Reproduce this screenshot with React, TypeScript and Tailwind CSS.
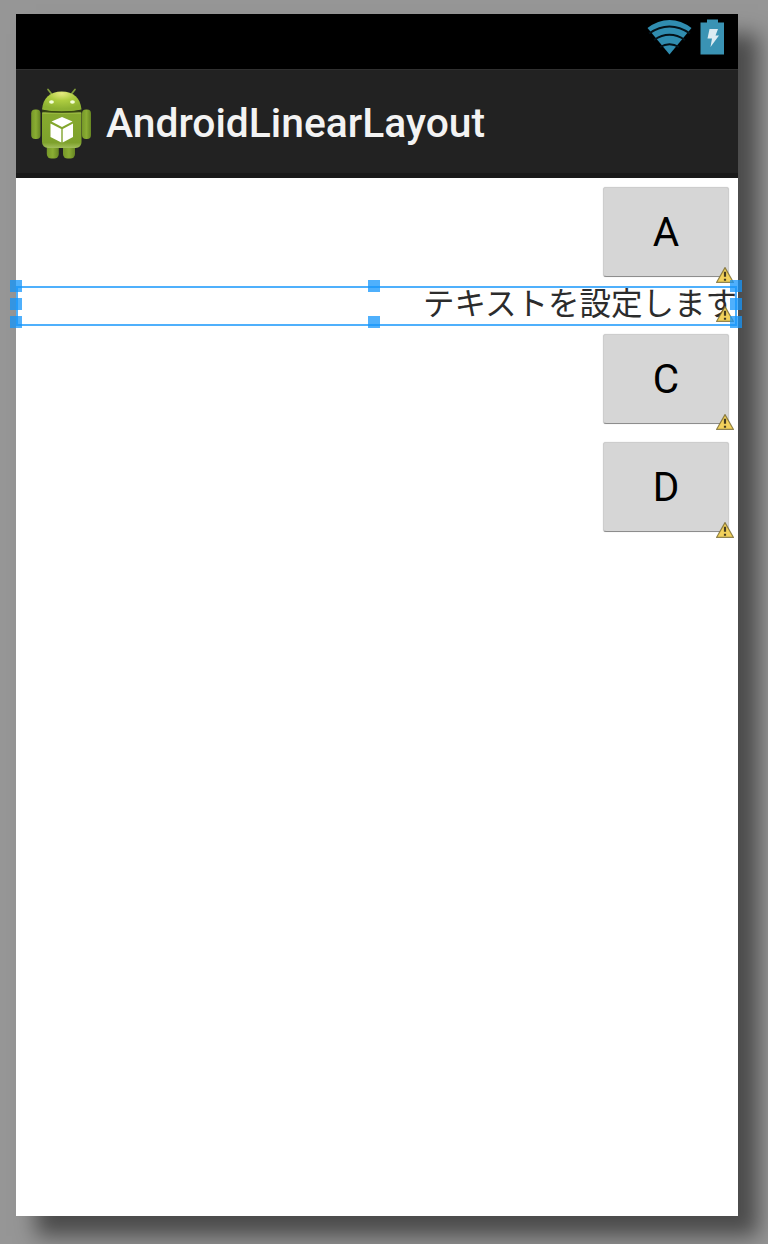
function Robot() {
  return (
    <svg className="ml-[15px] mt-[3px] h-[74px] w-[60px] shrink-0" viewBox="31 86 60 74">
      <defs>
        <linearGradient id="body" x1="0" y1="0" x2="0" y2="1">
          <stop offset="0" stopColor="#86a82f" />
          <stop offset="0.2" stopColor="#84a82e" />
          <stop offset="0.85" stopColor="#7ea12c" />
          <stop offset="1" stopColor="#a3bf5c" />
        </linearGradient>
        <radialGradient id="head" cx="0.5" cy="0.1" r="0.75">
          <stop offset="0" stopColor="#e6ea80" />
          <stop offset="0.45" stopColor="#aecd40" />
          <stop offset="1" stopColor="#8db132" />
        </radialGradient>
        <linearGradient id="limb" x1="0" y1="0" x2="1" y2="0">
          <stop offset="0" stopColor="#769829" />
          <stop offset="0.5" stopColor="#8aad33" />
          <stop offset="1" stopColor="#668522" />
        </linearGradient>
      </defs>
      <path d="M48 89.500l4 5M75 89.500l-4 5" stroke="#829e3a" strokeWidth="1.700" strokeLinecap="round" />
      <rect x="46.800" y="143" width="12" height="15.500" rx="4.500" fill="url(#limb)" />
      <rect x="63" y="143" width="12" height="15.500" rx="4.500" fill="url(#limb)" />
      <rect x="31.200" y="109.500" width="9.300" height="29.500" rx="4" fill="url(#limb)" />
      <rect x="82" y="109.500" width="9" height="29.500" rx="4" fill="url(#limb)" />
      <path d="M42 112.500h39.500V142q0 5.500-6 6H48.500q-6.500-.5-6.500-6z" fill="url(#body)" />
      <path d="M42.500 113h38.500" stroke="#a9c94d" strokeWidth="1" />
      <path d="M42 109.500C43 98 50 91.500 61.700 91.500S80.500 98 81.500 109.500Q72 112 61.500 112T42 109.500z" fill="url(#head)" />
      <path d="M42 111q19.500 2 39.500 0" stroke="#38480f" strokeWidth="1.400" fill="none" />
      <ellipse cx="51.500" cy="102" rx="2.400" ry="1.800" fill="#f4ffd8" />
      <ellipse cx="72.500" cy="102" rx="2.400" ry="1.800" fill="#f4ffd8" />
      <path d="M62 117l10.500 4.500L62 127l-10.500-5.500z" fill="#fff" />
      <path d="M50.500 123.500L61.300 129v13.500l-10.800-5.500zM73 123.500L62.700 129v13.500l10.300-5.500z" fill="#fff" />
    </svg>
  );
}

function StatusIcons() {
  return (
    <svg className="mr-[13px] mt-[4px] h-[38px] w-[78px]" viewBox="647 18 78 38">
      <path d="M669.500 54.500L647.500 28Q658 20 669.500 20T691.500 28z" fill="#308db0" />
      <path d="M649 33.500Q669.500 19.500 690 33.500M654 40Q669.500 29.500 685 40M660 47Q669.500 41.500 679 47" fill="none" stroke="#041219" strokeWidth="1.800" />
      <path d="M707 19.500h11v3h6V54.500h-23.500V22.500h6.500z" fill="#3a93b4" />
      <path d="M709.500 29h8.500l-2.500 6.500h3.500L710.500 47l1.500-8.500h-4.500z" fill="#dcebf2" />
    </svg>
  );
}

function Warning() {
  return (
    <svg className="absolute bottom-[3px] right-[4px] h-[16px] w-[18px]" viewBox="0 0 18 16">
      <path d="M9 .6L17.400 15.300H.6z" fill="#f2d15c" stroke="#75682f" strokeOpacity=".8" strokeWidth="1.200" />
      <path d="M9 4.800v5M9 11.800v2" stroke="#453c20" strokeWidth="2.200" />
    </svg>
  );
}

function ButtonRow({ label }: { label: string }) {
  return (
    <div className="relative flex h-[108px] justify-end pr-[9px] pt-[9px]">
      <button className="h-[90px] w-[126px] rounded-[3px] border border-[#cdcdcd] border-b-[#8d8d8d] bg-[#d6d6d6] text-[40.5px] leading-[86px] text-black shadow-[0_0_1px_rgba(0,0,0,0.25)]">
        {label}
      </button>
      <Warning />
    </div>
  );
}

function Handles({ side }: { side: "left" | "center" | "right" }) {
  const place = { left: "left-[-6px]", center: "left-[352px]", right: "right-[-4px]" }[side];
  return (
    <div className={"absolute top-[-6px] flex h-[48px] flex-col justify-between " + place}>
      <i className="h-[12px] w-[12px] bg-[#1496fb]/75" />
      {side !== "center" && <i className="h-[12px] w-[12px] bg-[#1496fb]/75" />}
      <i className="h-[12px] w-[12px] bg-[#1496fb]/75" />
    </div>
  );
}

export default function App() {
  return (
    <div className="h-[1244px] w-[768px] overflow-hidden bg-[#969696] pl-[16px] pt-[14px] font-['Roboto','Noto_Sans_CJK_JP',sans-serif]">
      <main className="h-[1202px] w-[722px] bg-white shadow-[20px_20px_20px_rgba(0,0,0,0.5)]">
        <div className="flex h-[55px] items-start justify-end bg-black">
          <StatusIcons />
        </div>
        <header className="flex h-[109px] items-center border-b-[5px] border-t border-b-[#191919] border-t-[#303030] bg-[#222]">
          <Robot />
          <h1 className="ml-[15px] mt-[4px] text-[40.8px] font-medium leading-none text-[#f3f3f3]">AndroidLinearLayout</h1>
        </header>
        <ButtonRow label="A" />
        <div className="relative h-[39px]">
          <p className="whitespace-nowrap pr-px text-right text-[31.5px] leading-[38px] text-[#2c2c2c]">テキストを設定します</p>
          <Warning />
          <div className="absolute left-0 top-0 h-[40px] w-[721px] border-2 border-[#1496fb]/75" />
          <Handles side="left" />
          <Handles side="center" />
          <Handles side="right" />
        </div>
        <ButtonRow label="C" />
        <ButtonRow label="D" />
      </main>
    </div>
  );
}
